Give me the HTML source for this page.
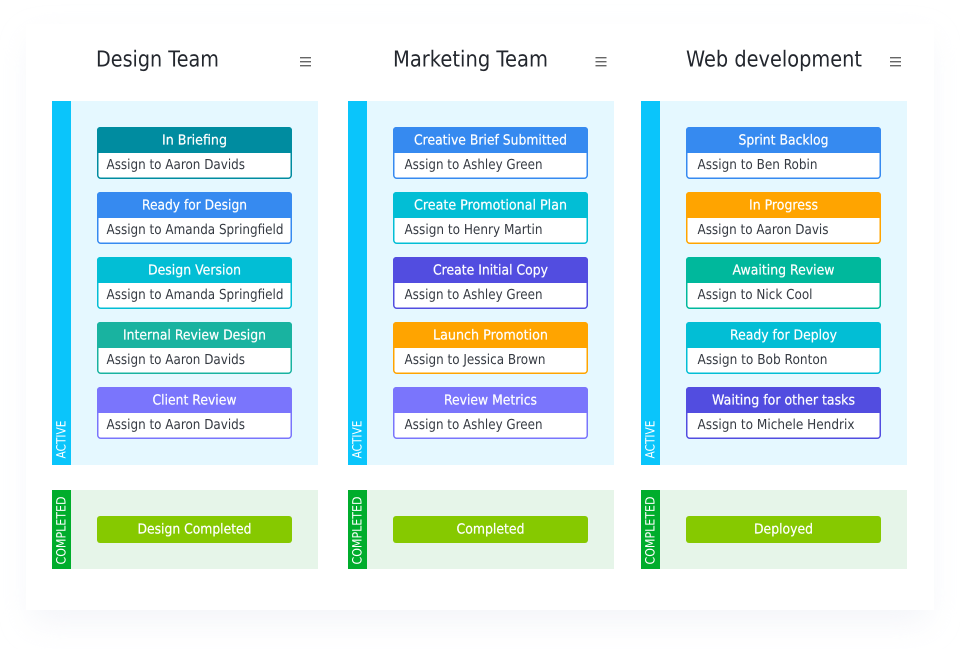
<!DOCTYPE html>
<html><head><meta charset="utf-8"><title>Team boards</title>
<style>
html,body{margin:0;padding:0;background:#fff;width:960px;height:649px;overflow:hidden}
svg{display:block}
text{font-family:"DejaVu Sans",sans-serif;text-rendering:geometricPrecision}
.t{font-size:22px;fill:#23272e}
.h{font-size:13.8px;fill:#fff;text-anchor:middle;stroke:#fff;stroke-width:.2px}
.b{font-size:13.8px;fill:#353a42}
.v{font-size:12.8px;fill:#fff}
</style></head><body>
<svg width="960" height="649" viewBox="0 0 960 649" xmlns="http://www.w3.org/2000/svg">
<defs>
<filter id="s" x="-10%" y="-10%" width="120%" height="125%"><feGaussianBlur stdDeviation="16"/></filter>
<g id="c"><rect x=".75" y=".75" width="193.5" height="50.5" rx="3" fill="#fff" stroke="currentColor" stroke-width="1.5"/><path d="M0 26V3a3 3 0 0 1 3-3h189a3 3 0 0 1 3 3v23z" fill="currentColor"/></g>
<g id="m"><rect x="0" y="0" width="11" height="1.4" fill="#666"/><rect x="0" y="4" width="11" height="1.4" fill="#666"/><rect x="0" y="8" width="11" height="1.4" fill="#666"/></g>
</defs>

<rect x="32" y="40" width="896" height="582" fill="#e9ecf4" opacity=".55" filter="url(#s)"/>
<rect x="26" y="24" width="908" height="586" fill="#fff"/>

<!-- Column 1 -->
<text class="t" x="96" y="66.500" textLength="123" lengthAdjust="spacingAndGlyphs">Design Team</text>
<use href="#m" x="300" y="57"/>
<rect x="52" y="101" width="266" height="364" fill="#e5f8ff"/><rect x="52" y="101" width="19" height="364" fill="#0ac5fb"/>
<text class="v" transform="translate(65.500,458.500) rotate(-90)" textLength="38" lengthAdjust="spacingAndGlyphs">ACTIVE</text>
<rect x="52" y="490" width="266" height="79" fill="#e6f5e9"/><rect x="52" y="490" width="19" height="79" fill="#00ad2c"/>
<text class="v" transform="translate(65.500,564.500) rotate(-90)" textLength="68" lengthAdjust="spacingAndGlyphs">COMPLETED</text>

<g transform="translate(97,127)" color="#008ca0"><use href="#c"/><text class="h" x="97.5" y="17.500" textLength="65" lengthAdjust="spacingAndGlyphs">In Briefing</text><text class="b" x="9.5" y="42" textLength="138.5" lengthAdjust="spacingAndGlyphs">Assign to Aaron Davids</text></g>
<g transform="translate(97,192)" color="#368af0"><use href="#c"/><text class="h" x="97.5" y="17.500" textLength="105" lengthAdjust="spacingAndGlyphs">Ready for Design</text><text class="b" x="9.5" y="42" textLength="177" lengthAdjust="spacingAndGlyphs">Assign to Amanda Springfield</text></g>
<g transform="translate(97,257)" color="#02bed5"><use href="#c"/><text class="h" x="97.5" y="17.500" textLength="93" lengthAdjust="spacingAndGlyphs">Design Version</text><text class="b" x="9.5" y="42" textLength="177" lengthAdjust="spacingAndGlyphs">Assign to Amanda Springfield</text></g>
<g transform="translate(97,322)" color="#19b3a0"><use href="#c"/><text class="h" x="97.5" y="17.500" textLength="143" lengthAdjust="spacingAndGlyphs">Internal Review Design</text><text class="b" x="9.5" y="42" textLength="138.5" lengthAdjust="spacingAndGlyphs">Assign to Aaron Davids</text></g>
<g transform="translate(97,387)" color="#7a75fc"><use href="#c"/><text class="h" x="97.5" y="17.500" textLength="84" lengthAdjust="spacingAndGlyphs">Client Review</text><text class="b" x="9.5" y="42" textLength="138.5" lengthAdjust="spacingAndGlyphs">Assign to Aaron Davids</text></g>
<rect x="97" y="516" width="195" height="27" rx="3" fill="#86c900"/>
<text class="h" x="194.5" y="533.500" textLength="114" lengthAdjust="spacingAndGlyphs">Design Completed</text>

<!-- Column 2 -->
<text class="t" x="393" y="66.500" textLength="155" lengthAdjust="spacingAndGlyphs">Marketing Team</text>
<use href="#m" x="595.500" y="57"/>
<rect x="348" y="101" width="266" height="364" fill="#e5f8ff"/><rect x="348" y="101" width="19" height="364" fill="#0ac5fb"/>
<text class="v" transform="translate(361.500,458.500) rotate(-90)" textLength="38" lengthAdjust="spacingAndGlyphs">ACTIVE</text>
<rect x="348" y="490" width="266" height="79" fill="#e6f5e9"/><rect x="348" y="490" width="19" height="79" fill="#00ad2c"/>
<text class="v" transform="translate(361.500,564.500) rotate(-90)" textLength="68" lengthAdjust="spacingAndGlyphs">COMPLETED</text>

<g transform="translate(393,127)" color="#368af0"><use href="#c"/><text class="h" x="97.5" y="17.500" textLength="153" lengthAdjust="spacingAndGlyphs">Creative Brief Submitted</text><text class="b" x="11.500" y="42" textLength="138" lengthAdjust="spacingAndGlyphs">Assign to Ashley Green</text></g>
<g transform="translate(393,192)" color="#02bed5"><use href="#c"/><text class="h" x="97.5" y="17.500" textLength="153" lengthAdjust="spacingAndGlyphs">Create Promotional Plan</text><text class="b" x="11.500" y="42" textLength="138" lengthAdjust="spacingAndGlyphs">Assign to Henry Martin</text></g>
<g transform="translate(393,257)" color="#524de0"><use href="#c"/><text class="h" x="97.5" y="17.500" textLength="115" lengthAdjust="spacingAndGlyphs">Create Initial Copy</text><text class="b" x="11.500" y="42" textLength="138" lengthAdjust="spacingAndGlyphs">Assign to Ashley Green</text></g>
<g transform="translate(393,322)" color="#ffa400"><use href="#c"/><text class="h" x="97.5" y="17.500" textLength="115" lengthAdjust="spacingAndGlyphs">Launch Promotion</text><text class="b" x="11.500" y="42" textLength="141" lengthAdjust="spacingAndGlyphs">Assign to Jessica Brown</text></g>
<g transform="translate(393,387)" color="#7a75fc"><use href="#c"/><text class="h" x="97.5" y="17.500" textLength="93" lengthAdjust="spacingAndGlyphs">Review Metrics</text><text class="b" x="11.500" y="42" textLength="138" lengthAdjust="spacingAndGlyphs">Assign to Ashley Green</text></g>
<rect x="393" y="516" width="195" height="27" rx="3" fill="#86c900"/>
<text class="h" x="490.500" y="533.500" textLength="68" lengthAdjust="spacingAndGlyphs">Completed</text>

<!-- Column 3 -->
<text class="t" x="686" y="66.500" textLength="176" lengthAdjust="spacingAndGlyphs">Web development</text>
<use href="#m" x="890" y="57"/>
<rect x="641" y="101" width="266" height="364" fill="#e5f8ff"/><rect x="641" y="101" width="19" height="364" fill="#0ac5fb"/>
<text class="v" transform="translate(654.500,458.500) rotate(-90)" textLength="38" lengthAdjust="spacingAndGlyphs">ACTIVE</text>
<rect x="641" y="490" width="266" height="79" fill="#e6f5e9"/><rect x="641" y="490" width="19" height="79" fill="#00ad2c"/>
<text class="v" transform="translate(654.500,564.500) rotate(-90)" textLength="68" lengthAdjust="spacingAndGlyphs">COMPLETED</text>

<g transform="translate(686,127)" color="#368af0"><use href="#c"/><text class="h" x="97.5" y="17.500" textLength="90" lengthAdjust="spacingAndGlyphs">Sprint Backlog</text><text class="b" x="11.500" y="42" textLength="120" lengthAdjust="spacingAndGlyphs">Assign to Ben Robin</text></g>
<g transform="translate(686,192)" color="#ffa400"><use href="#c"/><text class="h" x="97.5" y="17.500" textLength="69" lengthAdjust="spacingAndGlyphs">In Progress</text><text class="b" x="11.500" y="42" textLength="131" lengthAdjust="spacingAndGlyphs">Assign to Aaron Davis</text></g>
<g transform="translate(686,257)" color="#00b89c"><use href="#c"/><text class="h" x="97.5" y="17.500" textLength="102" lengthAdjust="spacingAndGlyphs">Awaiting Review</text><text class="b" x="11.500" y="42" textLength="115" lengthAdjust="spacingAndGlyphs">Assign to Nick Cool</text></g>
<g transform="translate(686,322)" color="#02bed5"><use href="#c"/><text class="h" x="97.5" y="17.500" textLength="107" lengthAdjust="spacingAndGlyphs">Ready for Deploy</text><text class="b" x="11.500" y="42" textLength="130" lengthAdjust="spacingAndGlyphs">Assign to Bob Ronton</text></g>
<g transform="translate(686,387)" color="#524de0"><use href="#c"/><text class="h" x="97.5" y="17.500" textLength="143" lengthAdjust="spacingAndGlyphs">Waiting for other tasks</text><text class="b" x="11.500" y="42" textLength="157" lengthAdjust="spacingAndGlyphs">Assign to Michele Hendrix</text></g>
<rect x="686" y="516" width="195" height="27" rx="3" fill="#86c900"/>
<text class="h" x="783.500" y="533.500" textLength="59" lengthAdjust="spacingAndGlyphs">Deployed</text>
</svg>
</body></html>
